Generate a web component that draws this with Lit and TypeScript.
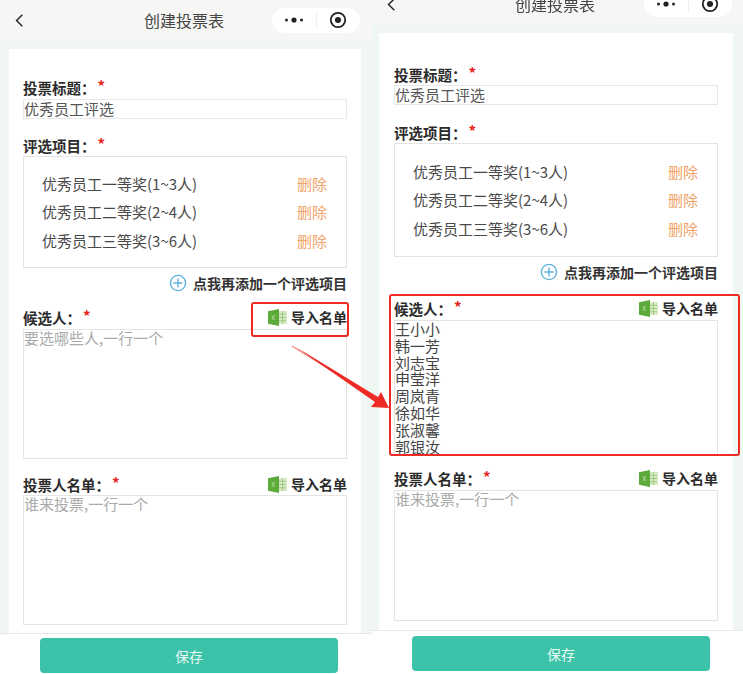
import { LitElement, html, css, svg } from "lit";
import { customElement } from "lit/decorators.js";

const excel = html`<svg class="xl" viewBox="0 0 19 17" width="19" height="17">
  <rect x="9" y="2" width="10" height="13" fill="#d9eac6"/>
  <path d="M11 5.2h7M11 8.5h7M11 11.8h7M14.5 2v13" stroke="#9cc67c" stroke-width=".9"/>
  <path d="M0 2.2 11 0v17L0 14.8z" fill="#5da93a"/>
  <path d="M3.8 6l3 5M6.8 6l-3 5" stroke="#b7dd9e" stroke-width=".9"/>
</svg>`;

const plus = html`<svg viewBox="0 0 18 18" width="18" height="18">
  <circle cx="9" cy="9" r="7.6" fill="none" stroke="#5db2dc" stroke-width="1.4"/>
  <path d="M4.5 9h9M9 4.5v9" stroke="#5db2dc" stroke-width="1.4"/>
</svg>`;

const chevron = html`<svg viewBox="0 0 12 18" width="10" height="15">
  <path d="M10 2 3 9l7 7" fill="none" stroke="#222" stroke-width="1.7"/>
</svg>`;

const dots = html`<svg viewBox="0 0 20 6" width="20" height="6">
  <circle cx="2.5" cy="3" r="1.5" fill="#222"/><circle cx="10" cy="3" r="2.6" fill="#222"/><circle cx="17.5" cy="3" r="1.5" fill="#222"/>
</svg>`;

const target = html`<svg viewBox="0 0 20 20" width="18" height="18">
  <circle cx="10" cy="10" r="8" fill="none" stroke="#222" stroke-width="2"/><circle cx="10" cy="10" r="3.4" fill="#222"/>
</svg>`;

const arrow = svg`<path d="M292 346 384 404" stroke="#ee2a24" stroke-width=".8" fill="none"/><path d="M296 347 378 397 381 392 389 408 371 407 375 402z" fill="#ee2a24"/>`;

const items = ["优秀员工一等奖(1~3人)", "优秀员工二等奖(2~4人)", "优秀员工三等奖(3~6人)"];
const names = ["王小小", "韩一芳", "刘志宝", "申莹洋", "周岚青", "徐如华", "张淑馨", "郭银汝"];

@customElement("app-root")
export class AppRoot extends LitElement {
  static styles = css`
    :host { display: block; position: relative; width: 743px; height: 674px; overflow: hidden; background: #fff;
      font-family: "Noto Sans CJK SC", "Liberation Sans", sans-serif; color: #333; }
    .stage { display: flex; width: 743px; height: 674px; filter: blur(.35px); }
    .phone { display: flex; flex-direction: column; background: #f0f7f2; }
    .phone.a { width: 372px; height: 674px; --cl: 9px; --cr: 11px; --pad: 14px; --top: 29px; --g1: 17px; --rp: 12px; --box: 112px; --ta1: 130px; --ta2: 130px; --g3: 15px; --g4: 16px; --tv: 0px; --foot: 41px; --bt: 4px; --np: 12px; }
    .phone.b { width: 371px; height: 690px; margin-top: -16px; --cl: 7px; --cr: 10px; --pad: 15px; --top: 32px; --g1: 18px; --rp: 13px; --box: 114px; --ta1: 135px; --ta2: 131px; --g3: 17px; --g4: 14px; --tv: 1px; --foot: 44px; --bt: 5px; --np: 11px; }
    .nav { flex: none; height: 40px; box-sizing: border-box; background: #f6f7f5; display: flex; align-items: center; position: relative; padding: 0 var(--np) 0 14px; }
    .nav .title { position: absolute; left: 144px; top: 8px; font-size: 16px; line-height: 24px; color: #444; }
    .b .nav .title { left: 143px; }
    .capsule { margin-left: auto; width: 88px; height: 25px; border-radius: 13px; background: #fff; display: flex; align-items: center; }
    .capsule span { flex: 1; display: flex; align-items: center; justify-content: center; }
    .capsule span + span { border-left: 1px solid #eee; height: 18px; }
    .card { flex: 1; margin: 9px var(--cr) 0 var(--cl); padding: var(--top) var(--pad) 0; background: #fff; min-height: 0; overflow: hidden; }
    .label { display: flex; align-items: center; box-sizing: border-box; height: 20px; padding-bottom: 2px; font-size: 14.5px; font-weight: 700; color: #2b2b2b; white-space: nowrap; }
    .star { color: #e5231c; margin-left: 2px; margin-top: -3px; font-size: 15px; line-height: 16px; }
    .imp { margin-left: auto; display: flex; align-items: center; gap: 4px; font-size: 14px; }
    .input { height: 20px; box-sizing: border-box; margin-top: 1px; border: 1px solid #e8e8e8; font-size: 15px; line-height: 18px; color: #555; white-space: nowrap; }
    .b .input { margin-top: 0; }
    .second { margin-top: var(--g1); }
    .box { height: var(--box); box-sizing: border-box; border: 1px solid #e4e4e4; padding: var(--rp) 19px 0 18px; }
    .row { display: flex; justify-content: space-between; align-items: center; height: 28.6px; font-size: 15px; color: #4a4a4a; white-space: nowrap; }
    .del { color: #f0a368; font-size: 15px; }
    .add { margin-top: 5px; height: 20px; display: flex; align-items: center; justify-content: flex-end; gap: 6px; font-size: 14px; font-weight: 700; color: #333; white-space: nowrap; }
    .third { margin-top: var(--g3); }
    .ta { height: var(--ta1); box-sizing: border-box; margin-top: 1px; border: 1px solid #e4e4e4; font-size: 15px; line-height: 16.8px; color: #444; }
    .names { overflow: hidden; }
    .ta.ph { color: #aaa; }
    .fourth { margin-top: var(--g4); }
    .ta.v { margin-top: var(--tv); height: var(--ta2); }
    .foot { flex: none; height: var(--foot); box-sizing: border-box; background: #fff; border-top: 1px solid #e8e8e8; padding: var(--bt) 0 0 40px; }
    .btn { width: 298px; height: 35px; border-radius: 4px; background: #3cc2a8; color: #e8f8f4; font-size: 14px; display: flex; align-items: center; justify-content: center; }
    .hl { position: absolute; box-sizing: border-box; border: 2.5px solid #ee2a24; border-radius: 3px; }
    .hl.one { left: 251px; top: 302px; width: 98px; height: 35px; }
    .hl.two { left: 389px; top: 294px; width: 351px; height: 162px; }
    .arrow { position: absolute; left: 0; top: 0; }
  `;

  private phone(cls: string, filled: boolean) {
    return html`<div class="phone ${cls}">
      <div class="nav">
        ${chevron}
        <div class="title">创建投票表</div>
        <div class="capsule"><span>${dots}</span><span>${target}</span></div>
      </div>
      <div class="card">
        <div class="label">投票标题：<span class="star">*</span></div>
        <div class="input">优秀员工评选</div>
        <div class="label second">评选项目：<span class="star">*</span></div>
        <div class="box">
          ${items.map((t) => html`<div class="row"><span>${t}</span><span class="del">删除</span></div>`)}
        </div>
        <div class="add">${plus}<span>点我再添加一个评选项目</span></div>
        <div class="label third">候选人：<span class="star">*</span><span class="imp">${excel}导入名单</span></div>
        ${filled
          ? html`<div class="ta names">${names.map((n) => html`<div>${n}</div>`)}</div>`
          : html`<div class="ta ph">要选哪些人,一行一个</div>`}
        <div class="label fourth">投票人名单：<span class="star">*</span><span class="imp">${excel}导入名单</span></div>
        <div class="ta ph v">谁来投票,一行一个</div>
      </div>
      <div class="foot"><div class="btn">保存</div></div>
    </div>`;
  }

  render() {
    return html`<div class="stage">${this.phone("a", false)}${this.phone("b", true)}</div>
      <div class="hl one"></div>
      <div class="hl two"></div>
      <svg class="arrow" width="743" height="674">${arrow}</svg>`;
  }
}
